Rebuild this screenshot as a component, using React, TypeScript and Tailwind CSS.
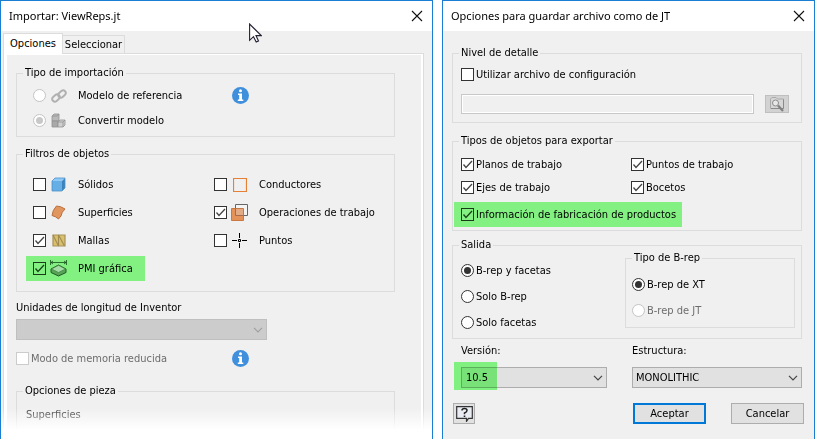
import React, { ReactNode } from "react";

const CheckMark = ({ color }: { color: string }) => (
  <svg viewBox="0 0 13 13" className={`pointer-events-none size-[13px] [grid-area:1/1] ${color}`} fill="none">
    <path d="M2.5 6.5 L5 9.5 L11 3" stroke="currentColor" strokeWidth="1.3" />
  </svg>
);

type OptionProps = {
  label: string;
  icon?: ReactNode;
  checked?: boolean;
  disabled?: boolean;
  green?: boolean;
};

function CheckOption({ label, icon, checked, disabled, green }: OptionProps) {
  return (
    <label className={`flex items-center ${disabled ? "text-[#6d6d6d]" : ""}`}>
      <span className="grid shrink-0">
        <input
          type="checkbox"
          defaultChecked={checked}
          disabled={disabled}
          className={`size-[13px] appearance-none border [grid-area:1/1] ${
            disabled ? "border-[#cccccc] bg-white" : green ? "border-[#1a3a1a]" : "border-[#333333] bg-white"
          }`}
        />
        {checked && <CheckMark color={green ? "text-[#174417]" : "text-[#444444]"} />}
      </span>
      {icon && <span className="ml-[4px] grid w-[17px] shrink-0 place-items-center">{icon}</span>}
      <span className={`whitespace-nowrap ${icon ? "ml-[11px]" : "ml-[2px]"}`}>{label}</span>
    </label>
  );
}

function RadioOption({
  name,
  label,
  icon,
  checked,
  disabled,
  grayText,
}: OptionProps & { name: string; grayText?: boolean }) {
  return (
    <label className={`flex items-center ${grayText ? "text-[#6d6d6d]" : ""}`}>
      <input
        type="radio"
        name={name}
        defaultChecked={checked}
        disabled={disabled}
        className={`grid size-[13px] shrink-0 appearance-none place-items-center rounded-full border bg-white before:size-[7px] before:rounded-full ${
          disabled ? "border-[#c4c4c4] checked:before:bg-[#c8c8c8]" : "border-[#333333] checked:before:bg-[#333333]"
        }`}
      />
      {icon && <span className="ml-[4px] grid w-[17px] shrink-0 place-items-center">{icon}</span>}
      <span className={`whitespace-nowrap ${icon ? "ml-[11px]" : "ml-[2px]"}`}>{label}</span>
    </label>
  );
}

type GroupProps = { title: string; className?: string; bodyClass: string; children?: ReactNode };

function Group({ title, className = "", bodyClass, children }: GroupProps) {
  return (
    <fieldset className={`min-w-0 border border-[#dcdcdc] ${className}`}>
      <legend className="ml-[6px] px-[2px] leading-4">{title}</legend>
      <div className={bodyClass}>{children}</div>
    </fieldset>
  );
}

function Chevron({ color }: { color: string }) {
  return (
    <svg viewBox="0 0 10 6" className={`pointer-events-none mr-1 h-[6px] w-[10px] self-center justify-self-end [grid-area:1/1] ${color}`} fill="none">
      <path d="M1 .8 L5 4.8 L9 .8" stroke="currentColor" strokeWidth="1.2" />
    </svg>
  );
}

function TitleBar({ title }: { title: string }) {
  return (
    <header className="flex h-[30px] items-center justify-between bg-white pr-[9px] pl-2">
      <h1 className="font-['Noto_Sans',sans-serif] text-[11px] leading-4">{title}</h1>
      <button type="button" aria-label="Cerrar">
        <svg viewBox="0 0 12 12" className="size-3" fill="none">
          <path d="M1 1 L11 11 M11 1 L1 11" stroke="#111" strokeWidth="1.1" />
        </svg>
      </button>
    </header>
  );
}

const InfoIcon = () => (
  <svg viewBox="0 0 17 17" className="size-[17px] shrink-0">
    <circle cx="8.5" cy="8.5" r="8.5" fill="#3f8fdd" />
    <circle cx="8.5" cy="3.7" r="1.5" fill="#fff" />
    <path d="M6 6.5h4v6h1.3v1.5H5.8v-1.5h1.4V8H6z" fill="#fff" />
  </svg>
);

const LinkIcon = () => (
  <svg viewBox="0 0 16 14" className="h-[14px] w-4" fill="none" stroke="#b0b0b0" strokeWidth="1.9">
    <rect x="-4.1" y="-2.6" width="8.2" height="5.2" rx="2.6" transform="translate(5 9) rotate(-42)" />
    <rect x="-4.1" y="-2.6" width="8.2" height="5.2" rx="2.6" transform="translate(11 5) rotate(-42)" />
  </svg>
);

const ConvertIcon = () => (
  <svg viewBox="0 0 15 15" className="size-[15px]" stroke="#929292" strokeWidth=".8">
    <path d="M1 3 L3 1 H8 V7 L7 8 H1z" fill="#b9b9b9" />
    <path d="M1 3 H6.5 L8 1" fill="none" />
    <path d="M1 8 H7 V14 H1z" fill="#a9a9a9" />
    <path d="M7 9 L9 7 H14 V12 L12 14 H7z" fill="#d0d0d0" />
    <path d="M7 9 H12 L14 7 M12 9 V14" fill="none" />
  </svg>
);

const SolidIcon = () => (
  <svg viewBox="0 0 15 15" className="size-[15px]">
    <path d="M1 4 L4 1 H14 L11 4z" fill="#8fcbf8" />
    <path d="M1 4 H11 V14 H1z" fill="#65aee6" />
    <path d="M11 4 L14 1 V11 L11 14z" fill="#3f83bb" />
    <path d="M1 4 L4 1 H14 V11 L11 14 H1z" fill="none" stroke="#4b8fc8" strokeWidth=".8" />
  </svg>
);

const SurfaceIcon = () => (
  <svg viewBox="0 0 15 15" className="size-[15px]">
    <path d="M5.500 1 Q9.500 1 14 4 Q10.500 7 10 11 L7.500 14 Q5 11.500 1 10.500 Q1.500 5 5.500 1z" fill="#e2965f" stroke="#b8703f" />
  </svg>
);

const MeshIcon = () => (
  <svg viewBox="0 0 14 13" className="h-[13px] w-[14px]">
    <path d="M1 1H13V12H1z" fill="#d9c06c" stroke="#a8915a" strokeWidth="1.2" />
    <path d="M1 1 L6.500 12 V1 L12.500 12" fill="none" stroke="#a08a52" strokeWidth="1.1" />
  </svg>
);

const PmiIcon = () => (
  <svg viewBox="0 0 17 17" className="size-[17px]">
    <path d="M1 9 L8.500 5 L16 9 V12.500 L8.500 16 L1 12.500z" fill="#58a558" stroke="#1d5a22" />
    <path d="M1.500 9 L8.500 5.300 L15.500 9 L8.500 12.500z" fill="#a5dba5" stroke="#3f8144" strokeWidth=".7" />
    <path d="M.5 0 V5 M16.500 0 V5 M1 2.500 H16 M3 1 L1 2.500 L3 4 M14 1 L16 2.500 L14 4" fill="none" stroke="#154e1a" strokeWidth=".8" />
  </svg>
);

const WireIcon = () => (
  <svg viewBox="0 0 14 14" className="size-[14px]">
    <path d="M.5 .5H13.500V13.500H.5z" fill="none" stroke="#e58036" strokeWidth="1.2" />
  </svg>
);

const WorkIcon = () => (
  <svg viewBox="0 0 17 17" className="size-[17px]">
    <path d="M4.500 .5H16.500V11.500H4.500z" fill="#f4f4f4" stroke="#666" />
    <path d="M.5 4.500H12.500V16.500H.5z" fill="#e59258" stroke="#c87941" />
    <path d="M5 5H12V11.500H5z" fill="#e2ab85" />
    <path d="M4.500 4.500V11.500H12.500" fill="none" stroke="#a0654a" strokeWidth=".9" />
  </svg>
);

const PointIcon = () => (
  <svg viewBox="0 0 15 15" className="size-[15px]" fill="none" stroke="#000">
    <path d="M0 7.500H5M10 7.500H15M7.500 0V5M7.500 10V15M6.500 6.500H8.500V8.500H6.500z" />
  </svg>
);

const BrowseIcon = () => (
  <svg viewBox="0 0 16 16" className="size-4">
    <path d="M1.500 3 L3 1.500 H7 L8.500 3 H14.500 V12.500 H1.500z" fill="#d6d6d6" stroke="#aaa" />
    <path d="M14.500 3.500 V12.500 H2" fill="none" stroke="#8a8a8a" />
    <circle cx="6.500" cy="7" r="3" fill="#e8e8e8" stroke="#8c8c8c" />
    <path d="M9 9.500 L14 15" stroke="#808080" strokeWidth="2.200" />
  </svg>
);

const HelpIcon = () => (
  <svg viewBox="0 0 17 16" className="h-4 w-[17px]">
    <path d="M.7 .7H16.300V12.300H12.500L10.500 15.300V12.300H.7z" fill="#e9edf3" stroke="#333" strokeWidth="1.2" />
    <path d="M6 4.500 Q6 2.500 8.500 2.500 Q11 2.500 11 4.500 Q11 6 8.500 7 V8.200" fill="none" stroke="#222" strokeWidth="1.500" />
    <path d="M7.700 9.500H9.300V11H7.700z" fill="#222" />
  </svg>
);

function ImportDialog() {
  return (
    <section className="relative flex flex-col overflow-hidden border border-[#1a7fd4] bg-[#f0f0f0]">
      <TitleBar title="Importar: ViewReps.jt" />
      <div className="mt-[2px] mr-2 ml-[2px] flex flex-1 flex-col">
        <div role="tablist" className="flex items-end">
          <button type="button" role="tab" aria-selected="true" className="z-10 -mb-px h-[21px] w-[60px] border border-b-0 border-[#dcdcdc] bg-white pb-px">
            Opciones
          </button>
          <button type="button" role="tab" aria-selected="false" className="-ml-px h-[18px] w-[63px] border border-b-0 border-[#dcdcdc]">
            Seleccionar
          </button>
        </div>
        <div className="flex-1 border border-[#dcdcdc]">
          <div className="h-full border-t border-r-2 border-l-[3px] border-white pt-[10px] pr-[26px] pl-[9px]">
            <Group title="Tipo de importación" bodyClass="pt-[2px] pb-[3px] pl-4">
              <div className="flex h-[25px] items-center">
                <div className="w-[199px]">
                  <RadioOption name="tipo" label="Modelo de referencia" icon={<LinkIcon />} disabled />
                </div>
                <InfoIcon />
              </div>
              <div className="flex h-[25px] items-center">
                <RadioOption name="tipo" label="Convertir modelo" icon={<ConvertIcon />} checked disabled />
              </div>
            </Group>

            <Group title="Filtros de objetos" className="mt-[9px]" bodyClass="pt-[9px] pb-[9px] pl-4">
              <div className="grid auto-rows-[27px] grid-cols-[181px_1fr] items-center gap-y-px">
                <CheckOption label="Sólidos" icon={<SolidIcon />} />
                <CheckOption label="Conductores" icon={<WireIcon />} />
                <CheckOption label="Superficies" icon={<SurfaceIcon />} />
                <CheckOption label="Operaciones de trabajo" icon={<WorkIcon />} checked />
                <CheckOption label="Mallas" icon={<MeshIcon />} checked />
                <CheckOption label="Puntos" icon={<PointIcon />} />
                <div className="-ml-[7px] flex h-[25px] w-[119px] items-center bg-[#82f182] pl-[7px]">
                  <CheckOption label="PMI gráfica" icon={<PmiIcon />} checked green />
                </div>
              </div>
            </Group>

            <label htmlFor="unidades" className="mt-2 block">
              Unidades de longitud de Inventor
            </label>
            <div className="mt-[3px] grid w-[251px]">
              <select id="unidades" disabled className="h-[21px] appearance-none border border-[#bfbfbf] bg-[#cccccc] [grid-area:1/1]" />
              <Chevron color="text-[#a0a0a0]" />
            </div>

            <div className="mt-[9px] flex h-[19px] items-center">
              <div className="w-[216px]">
                <CheckOption label="Modo de memoria reducida" disabled />
              </div>
              <InfoIcon />
            </div>

            <Group title="Opciones de pieza" className="mt-[15px]" bodyClass="pt-2 pb-4 pl-[9px]">
              <p className="text-[#333333]">Superficies</p>
            </Group>
          </div>
        </div>
      </div>

      {/* bottom fade out */}
      <div className="absolute -inset-x-px -bottom-px h-[34px] bg-linear-to-b from-transparent via-white via-65% to-white" />

      {/* mouse pointer */}
      <svg viewBox="0 0 13 20" className="absolute top-[22px] left-[248px] h-5 w-[13px]">
        <path d="M.6 1 V17.300 L4.500 13.700 L7.200 19 L9.500 17.900 L7 12.600 H12.200z" fill="#fff" stroke="#222233" strokeWidth="1.1" />
      </svg>
    </section>
  );
}

function ExportDialog() {
  return (
    <section className="border border-[#1a7fd4] bg-[#f0f0f0]">
      <TitleBar title="Opciones para guardar archivo como de JT" />
      <div className="pt-[14px] pr-3 pb-[14px] pl-[9px]">
        <Group title="Nivel de detalle" bodyClass="pt-[5px] pr-3 pb-2 pl-2">
          <div className="flex h-[17px] items-center">
            <CheckOption label="Utilizar archivo de configuración" />
          </div>
          <div className="mt-[11px] flex items-center gap-[11px]">
            <input
              type="text"
              disabled
              aria-label="Archivo de configuración"
              className="h-5 min-w-0 flex-1 border border-[#c8c8c8] shadow-[inset_0_0_0_1px_#ffffff]"
            />
            <button type="button" disabled aria-label="Examinar" className="grid h-[18px] w-6 place-items-center border border-[#bfbfbf] bg-[#d2d2d2]">
              <BrowseIcon />
            </button>
          </div>
        </Group>

        <Group title="Tipos de objetos para exportar" className="mt-[10px]" bodyClass="pt-1 pb-[3px] pl-2">
          <div className="grid auto-rows-[23px] grid-cols-[1fr_170px] items-center">
            <CheckOption label="Planos de trabajo" checked />
            <CheckOption label="Puntos de trabajo" checked />
            <CheckOption label="Ejes de trabajo" checked />
            <CheckOption label="Bocetos" checked />
          </div>
          <div className="mt-[3px] -ml-[7px] flex h-[25px] w-[228px] items-center bg-[#82f182] pl-[7px]">
            <CheckOption label="Información de fabricación de productos" checked green />
          </div>
        </Group>

        <Group title="Salida" className="mt-[6px]" bodyClass="pr-[6px] pb-[3px] pl-2">
          <div className="grid grid-cols-[1fr_170px]">
            <div className="grid auto-rows-[25px] items-center gap-px pt-[5px]">
              <RadioOption name="salida" label="B-rep y facetas" checked />
              <RadioOption name="salida" label="Solo B-rep" />
              <RadioOption name="salida" label="Solo facetas" />
            </div>
            <Group title="Tipo de B-rep" className="-mt-[3px] self-start" bodyClass="pt-[6px] pb-1 pl-[6px]">
              <div className="grid auto-rows-[25px] items-center gap-px">
                <RadioOption name="brep" label="B-rep de XT" checked />
                <RadioOption name="brep" label="B-rep de JT" disabled grayText />
              </div>
            </Group>
          </div>
        </Group>

        <div className="mt-1 grid grid-cols-[1fr_170px] gap-x-[25px] pl-[9px]">
          <div>
            <label htmlFor="version" className="block">
              Versión:
            </label>
            <div className="relative mt-2 grid">
              <select id="version" className="h-[21px] appearance-none border border-[#adadad] bg-[#e1e1e1] pl-1 [grid-area:1/1]">
                <option>10.5</option>
              </select>
              <Chevron color="text-[#444444]" />
              <span className="pointer-events-none absolute -top-[5px] -left-[7px] h-7 w-[43px] bg-[#88ff88] mix-blend-multiply" />
            </div>
          </div>
          <div>
            <label htmlFor="estructura" className="block">
              Estructura:
            </label>
            <div className="mt-2 grid">
              <select id="estructura" className="h-[21px] appearance-none border border-[#adadad] bg-[#e1e1e1] pl-[3px] [grid-area:1/1]">
                <option>MONOLITHIC</option>
              </select>
              <Chevron color="text-[#444444]" />
            </div>
          </div>
        </div>

        <div className="mt-[15px] -mr-[2px] flex pl-px">
          <button type="button" aria-label="Ayuda" className="mr-auto grid h-[21px] w-[22px] place-items-center border border-[#adadad] bg-[#e1e1e1]">
            <HelpIcon />
          </button>
          <button type="button" className="h-[21px] w-[73px] border-2 border-[#0078d7] bg-[#e1e1e1]">
            Aceptar
          </button>
          <button type="button" className="ml-[25px] h-[21px] w-[73px] border border-[#adadad] bg-[#e1e1e1]">
            Cancelar
          </button>
        </div>
      </div>
    </section>
  );
}

export default function App() {
  return (
    <main className="grid grid-cols-[433fr_373fr] gap-[9px] bg-white font-['DejaVu_Sans_Condensed','DejaVu_Sans',sans-serif] text-[11px] leading-4 text-black">
      <ImportDialog />
      <ExportDialog />
    </main>
  );
}
